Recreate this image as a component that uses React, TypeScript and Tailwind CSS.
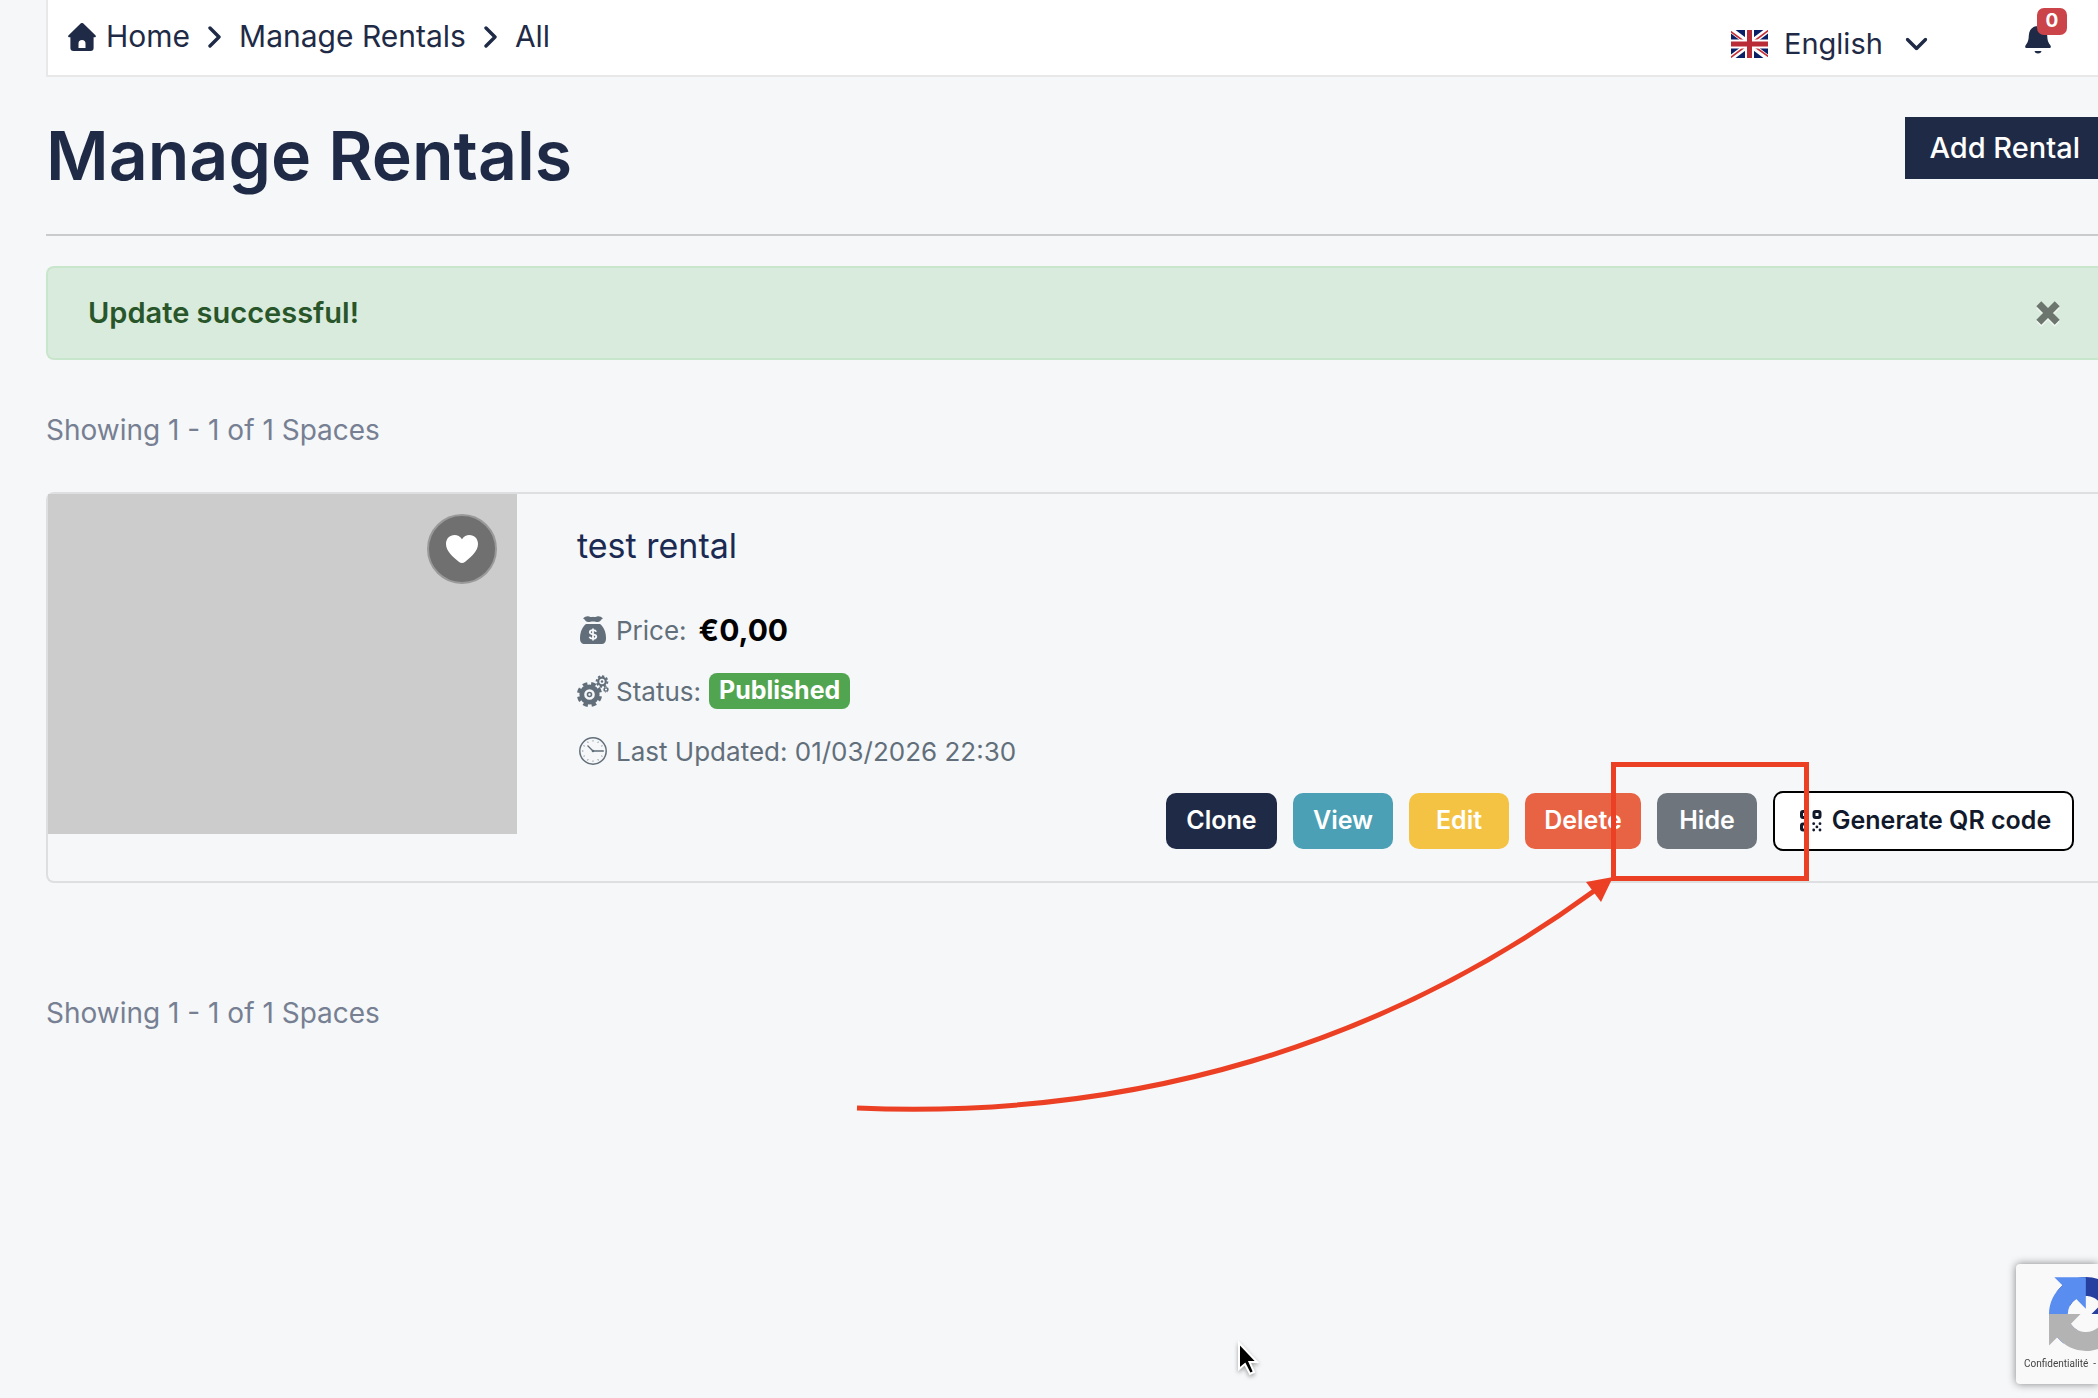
import React, { useState } from 'react'

// Navy house with a small door
const HomeIcon = () => (
  <svg viewBox="0 0 28 28" className="h-7 w-7 shrink-0" fill="currentColor" aria-hidden="true">
    <path
      fillRule="evenodd"
      d="M12.600.6a2 2 0 0 1 2.800 0l12 11.600c.9.9.4 2.100-.8 2.100h-1v10.700a3 3 0 0 1-3 3H5.400a3 3 0 0 1-3-3V14.300h-1c-1.200 0-1.700-1.200-.8-2.100zM10.500 25h7v-4.500a3.500 3.500 0 0 0-7 0z"
    />
  </svg>
)

const ChevronIcon = ({ className }: { className?: string }) => (
  <svg viewBox="0 0 13 22" className={className} fill="none" stroke="currentColor" strokeWidth="3.400" strokeLinecap="round" strokeLinejoin="round" aria-hidden="true">
    <path d="M2 2l9 9-9 9" />
  </svg>
)

const FlagIcon = () => (
  <svg viewBox="0 0 37 28" className="h-7 w-[37px] shrink-0" aria-hidden="true">
    <path fill="#0a1f66" d="M0 0h37v28H0z" />
    <path stroke="#fff" strokeWidth="5.500" d="M0 0l37 28M37 0L0 28" />
    <path stroke="#c22f38" strokeWidth="1.600" d="M-1 1l15 11M22 15.500L38 27M38 0L22 12M15 16L-1 28" />
    <path fill="#fff" d="M14 0h9v28h-9zM0 9.500h37v9H0z" />
    <path fill="#b92b36" d="M16 0h5v28h-5zM0 11.500h37v5H0z" />
  </svg>
)

const BellIcon = () => (
  <svg viewBox="0 0 26 28" className="h-7 w-[26px]" fill="currentColor" aria-hidden="true">
    <path d="M13 0c5.800 0 8.800 4 9.200 9.500.3 5 .8 6.500 3 9.500 1.200 1.700.7 3-1 3H1.800c-1.700 0-2.200-1.300-1-3 2.200-3 2.700-4.500 3-9.500C4.200 4 7.200 0 13 0z" />
    <path d="M9.500 25h7c-.5 1.800-1.800 2.500-3.500 2.500S10 26.800 9.500 25z" />
  </svg>
)

const CloseIcon = () => (
  <svg viewBox="0 0 24 24" className="h-6 w-6 drop-shadow-[0_2px_0_rgba(255,255,255,0.6)]" stroke="#6c766f" strokeWidth="7" aria-hidden="true">
    <path d="M2.800 2.800l18.400 18.400M21.200 2.800L2.800 21.200" />
  </svg>
)

const HeartIcon = () => (
  <svg viewBox="0 0 32 28" className="h-7 w-8" fill="#fff" aria-hidden="true">
    <path d="M16 4.300C18 1.200 20.500 0 23.300 0 28.500 0 32 3.800 32 9c0 7-6.500 12.500-12.800 17.800-2 1.600-4.400 1.600-6.400 0C6.500 21.500 0 16 0 9c0-5.200 3.500-9 8.700-9C11.500 0 14 1.200 16 4.300z" />
  </svg>
)

const MoneyBagIcon = () => (
  <svg viewBox="0 0 28 28" className="h-7 w-7" fill="currentColor" aria-hidden="true">
    <path d="M4 2.500C6 .5 8 0 10 .5c2 .6 3 .8 4 .2 1 .6 2 .4 4-.2 2-.5 4 0 6 2-2 .5-2.500 3.500-5 3.500-2 0-3-.6-5-.6S11 6 9 6C6.500 6 6 3 4 2.500z" />
    <path d="M7 8h14c3.500 2.500 6 8 6 14 0 4-1.500 6-5 6H6c-3.500 0-5-2-5-6C1 16 3.500 10.500 7 8z" />
    <path d="M17.200 15.800c-.4-1.100-1.600-1.700-3.200-1.700-1.900 0-3.200.8-3.200 2.100 0 3 6.500 1.200 6.500 4.200 0 1.400-1.400 2.200-3.300 2.200-1.800 0-3.100-.7-3.500-1.900M14 12.500v12" fill="none" stroke="#f5f7f9" strokeWidth="1.800" />
  </svg>
)

const GearsIcon = () => (
  <svg viewBox="0 0 32 32" className="h-8 w-8" fill="none" stroke="currentColor" aria-hidden="true">
    <circle cx="12.500" cy="19.500" r="7.700" strokeWidth="4.800" />
    <circle cx="12.500" cy="19.500" r="11" strokeWidth="3.200" pathLength="80" strokeDasharray="5.500 4.500" strokeDashoffset="-2" />
    <circle cx="12.500" cy="19.500" r="2" strokeWidth="1.600" />
    <circle cx="25" cy="6.500" r="3.800" strokeWidth="2.200" />
    <circle cx="25" cy="6.500" r="5.400" strokeWidth="1.900" pathLength="80" strokeDasharray="5.500 4.500" />
    <circle cx="25" cy="6.500" r="1.200" fill="currentColor" stroke="none" />
    <circle cx="29" cy="14.500" r="1.700" strokeWidth="1.300" />
    <circle cx="29" cy="14.500" r="2.600" strokeWidth="1" pathLength="80" strokeDasharray="5 5" />
  </svg>
)

const ClockIcon = () => (
  <svg viewBox="0 0 28 28" className="h-7 w-7" fill="none" stroke="currentColor" aria-hidden="true">
    <circle cx="14" cy="14" r="13.200" strokeWidth="1.500" />
    <circle cx="14" cy="14" r="10.200" strokeWidth="1.300" pathLength="120" strokeDasharray="1.500 8.500" strokeDashoffset="0.750" />
    <path d="M8.500 8.500L14 14h10.500" strokeWidth="1.300" />
    <circle cx="14" cy="14" r="1.300" fill="currentColor" stroke="none" />
  </svg>
)

const QrIcon = () => (
  <svg viewBox="0 0 22 22" className="h-[22px] w-[22px]" aria-hidden="true">
    <g fill="none" stroke="currentColor" strokeWidth="3">
      <rect x="1.500" y="1.500" width="6" height="6" rx="1.500" />
      <rect x="14" y="1.500" width="6" height="6" rx="1.500" />
      <rect x="1.500" y="14" width="6" height="6" rx="1.500" />
    </g>
    <g fill="currentColor">
      <circle cx="13.700" cy="13.700" r="1.400" />
      <circle cx="20" cy="13.700" r="1.400" />
      <circle cx="16.900" cy="16.900" r="1.400" />
      <circle cx="13.700" cy="20" r="1.400" />
      <circle cx="20" cy="20" r="1.400" />
    </g>
  </svg>
)

// Red frame round the Hide button, with the arrow that leads to it
const Highlight = () => (
  <div className="pointer-events-none absolute -top-[31px] -right-[52px] -bottom-8 -left-[46px] z-10 border-[5px] border-[#ec4025]">
    <svg viewBox="0 0 760 240" className="absolute -bottom-60 -left-[760px] h-[240px] w-[760px] overflow-visible" aria-hidden="true">
      <path d="M1 232C280 244 530 167 738 15" fill="none" stroke="#ec4025" strokeWidth="5" />
      <path d="M757 1L730 6l15 20z" fill="#ec4025" />
    </svg>
  </div>
)

const RecaptchaBadge = () => (
  <aside className="fixed right-0 bottom-[14px] h-[120px] w-[82px] overflow-hidden rounded-l bg-[#f9f9f9] shadow-[0_0_8px_gray]">
    <svg viewBox="0 0 64 64" className="mt-[13px] ml-[33px] h-[74px] w-[74px]" aria-hidden="true">
      <path fill="#2740a0" d="M64 31.955l-.033-1.370V4.687l-7.160 7.160C50.948 4.674 42.033.093 32.050.093c-10.400 0-19.622 4.960-25.458 12.640l11.736 11.860a15.550 15.550 0 0 1 4.754-5.334c2.050-1.600 4.952-2.906 8.968-2.906.485 0 .86.057 1.135.163 4.976.393 9.288 3.140 11.828 7.124l-8.307 8.307L64 31.953" />
      <path fill="#5a8df0" d="M31.862.094l-1.370.033H4.594l7.160 7.160C4.580 13.147 0 22.060 0 32.046c0 10.400 4.960 19.622 12.640 25.458L24.500 45.768a15.550 15.550 0 0 1-5.334-4.754c-1.600-2.050-2.906-4.952-2.906-8.968 0-.485.057-.86.163-1.135.393-4.976 3.140-9.288 7.124-11.828l8.307 8.307L31.860.095" />
      <path fill="#b3b3b3" d="M.001 32.045l.033 1.370v25.898l7.160-7.160c5.860 7.173 14.774 11.754 24.760 11.754 10.400 0 19.622-4.960 25.458-12.640l-11.736-11.860a15.550 15.550 0 0 1-4.754 5.334c-2.050 1.600-4.952 2.906-8.968 2.906-.485 0-.86-.057-1.135-.163-4.976-.393-9.288-3.140-11.828-7.124l8.307-8.307c-10.522.04-22.400.066-27.295-.005" />
    </svg>
    <p className="mt-[5px] ml-2 whitespace-pre font-['Roboto',sans-serif] text-[10px] leading-4 text-[#444]">Confidentialité  -</p>
  </aside>
)

const MousePointer = () => (
  <svg viewBox="0 0 24 38" className="pointer-events-none fixed bottom-5 left-[1236px] h-[38px] w-6 overflow-visible drop-shadow-[0_2px_2px_rgba(0,0,0,0.35)]" aria-hidden="true">
    <path d="M3 3v26l6-5 5 10 4-2-4.500-10H21z" fill="#000" stroke="#fff" strokeWidth="2" />
  </svg>
)

const actionClass = 'h-14 rounded-[10px] text-[25px] font-semibold text-white'

const App: React.FC = () => {
  const [language, setLanguage] = useState('English')
  const [showAlert, setShowAlert] = useState(true)
  const [liked, setLiked] = useState(false)
  const [hidden, setHidden] = useState(false)

  return (
    <div className="min-h-screen overflow-hidden bg-[#f5f7f9] pl-[46px] font-['Inter',sans-serif] text-[#1f2b46]">
      {/* Top bar */}
      <header className="flex h-[77px] items-start justify-between border-b-2 border-l-2 border-[#e8e8e8] bg-white pr-[47px] pl-5">
        <nav aria-label="Breadcrumb" className="flex h-[73px] items-center gap-[18px] text-[30px]">
          <a href="#home" className="flex items-center gap-[10px]">
            <HomeIcon />
            Home
          </a>
          <ChevronIcon className="h-[22px] w-[13px]" />
          <a href="#rentals">Manage Rentals</a>
          <ChevronIcon className="h-[22px] w-[13px]" />
          <a href="#all">All</a>
        </nav>

        <div className="flex items-start">
          <div className="flex items-center gap-4 pt-5">
            <FlagIcon />
            <select
              aria-label="Language"
              value={language}
              onChange={e => setLanguage(e.target.value)}
              className="h-12 w-[110px] appearance-none bg-transparent text-[29px] outline-none"
            >
              <option>English</option>
            </select>
            <ChevronIcon className="h-[22px] w-[13px] rotate-90" />
          </div>
          <button type="button" aria-label="Notifications" className="relative mt-[26px] ml-[102px]">
            <BellIcon />
            <span className="absolute -top-[18px] left-3 flex h-[27px] w-[30px] items-center justify-center rounded-[7px] bg-[#cb444a] text-[19px] font-bold text-white">0</span>
          </button>
        </div>
      </header>

      <main>
        {/* Page title */}
        <div className="flex items-start justify-between border-b-2 border-[#c9cbcd] pt-10 pb-[41px]">
          <h1 className="text-[68px] leading-[76px] font-semibold">Manage Rentals</h1>
          <button type="button" className="h-[62px] bg-[#1f2b46] pr-[18px] pl-6 text-[29px] font-medium text-white">Add Rental</button>
        </div>

        {/* Success message */}
        {showAlert && (
          <div role="alert" className="mt-[30px] flex h-[94px] items-center justify-between rounded-l-lg border-2 border-r-0 border-[#c8e6cc] bg-[#d9ebdc] pr-[38px] pl-10">
            <strong className="text-[29px] font-semibold text-[#28562a]">Update successful!</strong>
            <button type="button" aria-label="Close" onClick={() => setShowAlert(false)}>
              <CloseIcon />
            </button>
          </div>
        )}

        <p className="mt-[50px] text-[28px] leading-10 text-[#777f92]">Showing 1 - 1 of 1 Spaces</p>

        {/* Rental card */}
        <article className="mt-[42px] flex items-start rounded-l-lg border-2 border-r-0 border-[#dddfe1]">
          <div className="flex h-[340px] w-[469px] shrink-0 items-start justify-end bg-[#ccc] p-5">
            <button
              type="button"
              aria-label="Favorite"
              aria-pressed={liked}
              onClick={() => setLiked(!liked)}
              className="flex h-[70px] w-[70px] items-center justify-center rounded-full border-2 border-[#999] bg-[#707070]"
            >
              <HeartIcon />
            </button>
          </div>

          <div className="min-w-0 grow pt-7 pr-6 pb-[30px] pl-[60px]">
            <h2 className="text-[34px] leading-[48px] text-[#1b2a52]">
              <a href="#rental">test rental</a>
            </h2>
            <div className="mt-[30px] flex flex-col text-[26px] text-[#626f7a]">
              <div className="flex h-[60px] items-center">
                <span className="flex w-[39px] items-center pl-0.5"><MoneyBagIcon /></span>
                Price:
                <strong className="ml-3 text-[30px] font-bold text-black">€0,00</strong>
              </div>
              <div className="flex h-[62px] items-center">
                <span className="flex w-[39px] items-center"><GearsIcon /></span>
                Status:
                <span className="ml-2 flex h-9 items-center rounded-lg bg-[#52a550] px-[10px] text-[25px] font-bold text-white">{hidden ? 'Hidden' : 'Published'}</span>
              </div>
              <div className="flex h-[58px] items-center">
                <span className="flex w-[39px] items-center pl-0.5"><ClockIcon /></span>
                Last Updated: 01/03/2026 22:30
              </div>
            </div>

            {/* Actions */}
            <div className="mt-[11px] flex items-center justify-end gap-4">
              <button type="button" className={`${actionClass} w-[111px] bg-[#1f2b46]`}>Clone</button>
              <button type="button" className={`${actionClass} w-[100px] bg-[#4ba0b5]`}>View</button>
              <button type="button" className={`${actionClass} w-[100px] bg-[#f4c344]`}>Edit</button>
              <button type="button" className={`${actionClass} w-[116px] bg-[#e86344]`}>Delete</button>
              <div className="relative">
                <button type="button" onClick={() => setHidden(!hidden)} className={`${actionClass} w-[100px] bg-[#6e757d]`}>Hide</button>
                <Highlight />
              </div>
              <button type="button" className="flex h-[60px] w-[301px] items-center justify-center gap-[10px] rounded-[10px] border-2 border-black bg-white pl-1 text-[25px] font-semibold text-[#11192b]">
                <QrIcon />
                Generate QR code
              </button>
            </div>
          </div>
        </article>

        <p className="mt-[110px] text-[28px] leading-10 text-[#777f92]">Showing 1 - 1 of 1 Spaces</p>
      </main>

      <RecaptchaBadge />
      <MousePointer />
    </div>
  )
}

export default App
